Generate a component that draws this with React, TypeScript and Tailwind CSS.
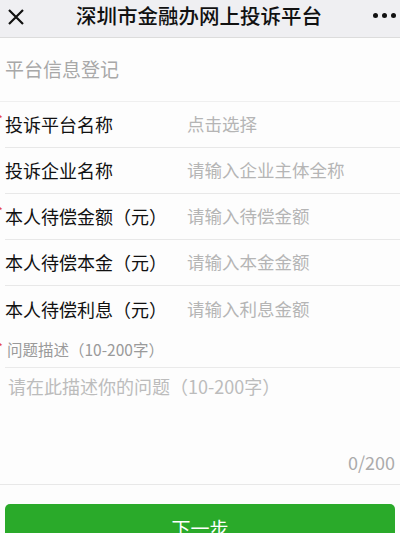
const font = { fontFamily: '"Noto Sans CJK SC", "Liberation Sans", sans-serif' }

interface RowProps {
  label: string
  placeholder: string
  required?: boolean
}

function Row({ label, placeholder, required }: RowProps) {
  return (
    <div className="relative flex h-[46px] items-center border-b border-[#e8e8e8] ml-[5px]">
      {required && <span className="absolute -left-[7px] top-[12px] text-[10px] leading-none text-[#e64340]">*</span>}
      <div className="w-[182px] shrink-0 text-[18px] text-[#111]">{label}</div>
      <div className="text-[17.5px] text-[#b5b5b5]">{placeholder}</div>
    </div>
  )
}

export default function App() {
  return (
    <div className="h-[533px] w-[400px] overflow-hidden bg-[#fdfdfd]" style={font}>
      <header className="flex h-[38px] items-center justify-between border-b border-[#dcdcdc] bg-[#efeff2] pl-[7px] pr-[4px]">
        <svg width="18" height="18" viewBox="0 0 18 18" className="-mt-[4px]">
          <path d="M2 2 L16 16 M16 2 L2 16" stroke="#111" strokeWidth="2.2" />
        </svg>
        <h1 className="-mt-[6px] text-[20.5px] font-medium text-[#111]">深圳市金融办网上投诉平台</h1>
        <div className="-mt-[6px] flex gap-[4px]">
          <span className="h-[5px] w-[5px] rounded-full bg-[#111]" />
          <span className="h-[5px] w-[5px] rounded-full bg-[#111]" />
          <span className="h-[5px] w-[5px] rounded-full bg-[#111]" />
        </div>
      </header>

      <div className="flex h-[64px] items-center border-b border-[#efefef] pl-[5px] text-[19px] text-[#a8a8a8]">
        平台信息登记
      </div>

      <Row label="投诉平台名称" placeholder="点击选择" required />
      <Row label="投诉企业名称" placeholder="请输入企业主体全称" />
      <Row label="本人待偿金额（元）" placeholder="请输入待偿金额" required />
      <Row label="本人待偿本金（元）" placeholder="请输入本金金额" />
      <div className="flex h-[46px] items-center ml-[5px]">
        <div className="w-[182px] shrink-0 text-[18px] text-[#111]">本人待偿利息（元）</div>
        <div className="text-[17.5px] text-[#b5b5b5]">请输入利息金额</div>
      </div>

      <div className="relative ml-[5px] flex h-[36px] items-center border-b border-[#eaeaea] pl-[2px] pt-[1px] text-[15.5px] text-[#9a9a9a]">
        <span className="absolute -left-[7px] top-[10px] text-[10px] leading-none text-[#e64340]">*</span>
        问题描述（10-200字）
      </div>

      <div className="flex h-[117px] flex-col justify-between border-b border-[#e8e8e8] pl-[8px] pr-[5px] pt-[5px] pb-[8px]">
        <div className="text-[18px] text-[#bcbcbc]">请在此描述你的问题（10-200字）</div>
        <div className="self-end text-[18px] text-[#ababab]">0/200</div>
      </div>

      <div className="px-[5px] pt-[19px]">
        <button className="flex h-[48px] w-full items-center justify-center rounded-[5px] bg-[#2aaa2a] text-[19px] text-white">
          下一步
        </button>
      </div>
    </div>
  )
}
